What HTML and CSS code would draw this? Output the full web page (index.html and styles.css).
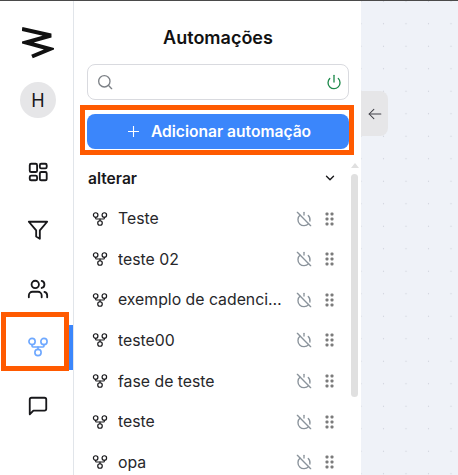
FILE: index.html
```html
<!DOCTYPE html>
<html lang="pt">
<head>
<meta charset="utf-8">
<title>Automações</title>
<link rel="stylesheet" href="styles.css">
</head>
<body>
<svg class="defs" width="0" height="0" aria-hidden="true">
  <symbol id="flow" viewBox="0 0 24 24" fill="none" stroke="currentColor" stroke-width="1.8" stroke-linecap="round" stroke-linejoin="round">
    <circle cx="12" cy="18" r="3.4"/><circle cx="5.5" cy="6" r="3.4"/><circle cx="18.5" cy="6" r="3.4"/>
    <path d="M18.5 9.4V11c0 .6-.4 1-1 1h-11c-.6 0-1-.4-1-1V9.4"/><path d="M12 12v2.6"/>
  </symbol>
  <symbol id="off" viewBox="0 0 24 24" fill="none" stroke="currentColor" stroke-width="2" stroke-linecap="round" stroke-linejoin="round">
    <path d="M18.36 6.64A9 9 0 0 1 20.77 15"/><path d="M6.16 6.16a9 9 0 1 0 12.68 12.68"/><path d="M12 2v4"/><path d="m2 2 20 20"/>
  </symbol>
  <symbol id="grip" viewBox="0 0 9 14">
    <g fill="currentColor"><rect x="0.5" y="0.5" width="3" height="3" rx="1"/><rect x="5.5" y="0.5" width="3" height="3" rx="1"/><rect x="0.5" y="5.5" width="3" height="3" rx="1"/><rect x="5.5" y="5.5" width="3" height="3" rx="1"/><rect x="0.5" y="10.5" width="3" height="3" rx="1"/><rect x="5.5" y="10.5" width="3" height="3" rx="1"/></g>
  </symbol>
</svg>
<div class="app">
  <nav class="rail">
    <svg class="logo" viewBox="0 0 32 32" fill="none" stroke="#111" stroke-width="4" stroke-linejoin="miter"><path d="M0 2 L29 8.5 L4 15.5 L28 22 L10 29.5"/></svg>
    <div class="avatar">H</div>
    <a class="rail-item"><svg class="rail-icon" viewBox="0 0 24 24" fill="none" stroke="currentColor" stroke-width="2" stroke-linejoin="round"><rect x="3" y="3" width="8" height="9" rx="1.5"/><rect x="14" y="3" width="7.5" height="5" rx="1.5"/><rect x="14" y="12" width="7.5" height="9" rx="1.5"/><rect x="3" y="16" width="8" height="5" rx="1.5"/></svg></a>
    <a class="rail-item"><svg class="rail-icon" viewBox="0 0 24 24" fill="none" stroke="currentColor" stroke-width="2" stroke-linejoin="round" stroke-linecap="round"><path d="M22 3H2l8 9.5V19l4 2.5v-9z"/></svg></a>
    <a class="rail-item"><svg class="rail-icon" viewBox="0 0 24 24" fill="none" stroke="currentColor" stroke-width="2" stroke-linecap="round" stroke-linejoin="round"><path d="M16 21v-2a4 4 0 0 0-4-4H6a4 4 0 0 0-4 4v2"/><circle cx="9" cy="7" r="4"/><path d="M22 21v-2a4 4 0 0 0-3-3.87"/><path d="M16 3.13a4 4 0 0 1 0 7.75"/></svg></a>
    <a class="rail-item active"><svg class="rail-icon"><use href="#flow"/></svg></a>
    <a class="rail-item"><svg class="rail-icon" viewBox="0 0 24 24" fill="none" stroke="currentColor" stroke-width="2" stroke-linecap="round" stroke-linejoin="round"><path d="M21 15a2 2 0 0 1-2 2H7l-4 4V5a2 2 0 0 1 2-2h14a2 2 0 0 1 2 2z"/></svg></a>
    <div class="mark mark-rail"></div>
  </nav>

  <section class="panel">
    <h1 class="title">Automações</h1>
    <div class="search">
      <svg class="search-icon" viewBox="0 0 24 24" fill="none" stroke="currentColor" stroke-width="2" stroke-linecap="round"><circle cx="11" cy="11" r="8.5"/><path d="m22 22-5-5"/></svg>
      <svg class="power-icon" viewBox="0 0 24 24" fill="none" stroke="currentColor" stroke-width="2" stroke-linecap="round"><path d="M12 2v10"/><path d="M18.4 6.6a9 9 0 1 1-12.77.04"/></svg>
    </div>
    <button class="add"><svg class="plus" viewBox="0 0 12 12" fill="none" stroke="currentColor" stroke-width="1.2"><path d="M6 0v12M0 6h12"/></svg>Adicionar automação</button>
    <div class="mark mark-add"></div>

    <div class="group">
      <span class="group-name">alterar</span>
      <svg class="chevron" viewBox="0 0 24 24" fill="none" stroke="currentColor" stroke-width="2.4" stroke-linecap="round" stroke-linejoin="round"><path d="m6 9 6 6 6-6"/></svg>
    </div>
    <ul class="list">
      <li class="row"><svg class="flow"><use href="#flow"/></svg><span class="name">Teste</span><svg class="off"><use href="#off"/></svg><svg class="grip"><use href="#grip"/></svg></li>
      <li class="row"><svg class="flow"><use href="#flow"/></svg><span class="name">teste 02</span><svg class="off"><use href="#off"/></svg><svg class="grip"><use href="#grip"/></svg></li>
      <li class="row"><svg class="flow"><use href="#flow"/></svg><span class="name">exemplo de cadencia de teste</span><svg class="off"><use href="#off"/></svg><svg class="grip"><use href="#grip"/></svg></li>
      <li class="row"><svg class="flow"><use href="#flow"/></svg><span class="name">teste00</span><svg class="off"><use href="#off"/></svg><svg class="grip"><use href="#grip"/></svg></li>
      <li class="row"><svg class="flow"><use href="#flow"/></svg><span class="name">fase de teste</span><svg class="off"><use href="#off"/></svg><svg class="grip"><use href="#grip"/></svg></li>
      <li class="row"><svg class="flow"><use href="#flow"/></svg><span class="name">teste</span><svg class="off"><use href="#off"/></svg><svg class="grip"><use href="#grip"/></svg></li>
      <li class="row"><svg class="flow"><use href="#flow"/></svg><span class="name">opa</span><svg class="off"><use href="#off"/></svg><svg class="grip"><use href="#grip"/></svg></li>
    </ul>
    <div class="scroll-arrow"></div>
    <div class="scroll-thumb"></div>
  </section>

  <main class="canvas">
    <div class="collapse">
      <svg class="arrow" viewBox="0 0 24 24" fill="none" stroke="currentColor" stroke-width="1.8" stroke-linecap="round" stroke-linejoin="round"><path d="M22 12H2"/><path d="m10 4-8 8 8 8"/></svg>
    </div>
  </main>
</div>
</body>
</html>
```
FILE: styles.css
```css
* { box-sizing: border-box; }
html, body { margin: 0; height: 100%; overflow: hidden; }
body { font-family: Inter, "Liberation Sans", sans-serif; color: #111827; background: #fff; }
.defs { position: absolute; }

.app { display: flex; height: 475px; width: 458px; border-top: 1px solid #4a4a4a; }

.rail {
  position: relative; flex: 0 0 74px; display: flex; flex-direction: column; align-items: center;
  border-right: 1px solid #e1e5ea; padding-top: 26px;
}
.logo { width: 32px; height: 32px; margin-left: 3px; }
.avatar {
  width: 36px; height: 36px; border-radius: 50%; background: #e6e6e8; margin-top: 23px; margin-left: 3px;
  display: flex; align-items: center; justify-content: center; font-size: 18px; color: #18181b;
}
.rail-item { display: flex; align-items: center; justify-content: center; width: 73px; height: 58.5px; color: #18181b; position: relative; padding-left: 2px; }
.avatar + .rail-item { margin-top: 24.5px; }
.rail-icon { width: 22px; height: 22px; }
.rail-item.active { color: #6ea8ff; }
.rail-item.active::after { content: ""; position: absolute; right: 0; top: 7px; width: 4px; height: 45px; background: #3b86fb; }
.mark { position: absolute; border: 5px solid #ff5a00; pointer-events: none; }
.mark-rail { left: 1px; top: 311px; width: 68px; height: 59px; }

.panel { position: relative; flex: 0 0 287px; padding: 0 12px 0 13px; background: #fff; overflow: hidden; }
.title { margin: 26px 0 0; font-size: 18px; line-height: 22px; font-weight: 600; text-align: center; color: #111; }
.search { height: 36px; margin-top: 15px; border: 1px solid #d9dadf; border-radius: 8px; display: flex; align-items: center; justify-content: space-between; padding: 0 6px 0 9px; }
.search-icon { width: 16px; height: 16px; color: #7c8086; }
.power-icon { width: 16px; height: 16px; color: #1f8a4c; }
.add {
  display: flex; align-items: center; justify-content: center; width: 100%; height: 35px; margin-top: 14px;
  border: 0; border-radius: 8px; background: #3b86fb; color: #fff; font: 600 15.6px Inter, sans-serif; padding: 0 0 0 3px;
}
.plus { width: 11px; height: 11px; margin-right: 12px; flex: none; }
.mark-add { left: 6px; top: 104px; width: 274px; height: 50px; }

.group { display: flex; align-items: center; justify-content: space-between; height: 20px; margin-top: 19px; padding: 0 12px 0 1px; }
.group-name { font-size: 15.6px; font-weight: 600; color: #18181b; }
.chevron { width: 14px; height: 14px; color: #18181b; }

.list { list-style: none; margin: 10.4px 0 0; padding: 0; }
.row { display: flex; align-items: center; height: 40.6px; padding-left: 5px; color: #27272a; }
.flow { width: 16px; height: 16px; color: #18181b; flex: none; }
.name { width: 165px; margin-left: 10px; font-size: 15.8px; white-space: nowrap; overflow: hidden; text-overflow: ellipsis; flex: none; }
.off { width: 16px; height: 16px; margin-left: 13px; color: #8a939b; flex: none; }
.grip { width: 9px; height: 14px; margin-left: 13px; color: #7b7b7b; flex: none; }

.scroll-arrow { position: absolute; left: 277px; top: 162px; width: 0; height: 0; border-left: 4px solid transparent; border-right: 4px solid transparent; border-bottom: 5px solid #e0e0e0; }
.scroll-thumb { position: absolute; left: 277px; top: 173px; width: 7px; height: 223px; border-radius: 4px; background: #e0e0e0; }

.canvas {
  position: relative; flex: 1; background-color: #eff2f8;
  background-image: radial-gradient(circle, #cdd1d9 0.7px, transparent 1px);
  background-size: 22.5px 22.5px; background-position: -11.25px -11px;
}
.collapse { position: absolute; left: 0; top: 90px; width: 27px; height: 45px; background: #e6e6e8; border-radius: 0 8px 8px 0; display: flex; align-items: center; justify-content: center; }
.arrow { width: 14px; height: 14px; color: #3f3f46; }
```
